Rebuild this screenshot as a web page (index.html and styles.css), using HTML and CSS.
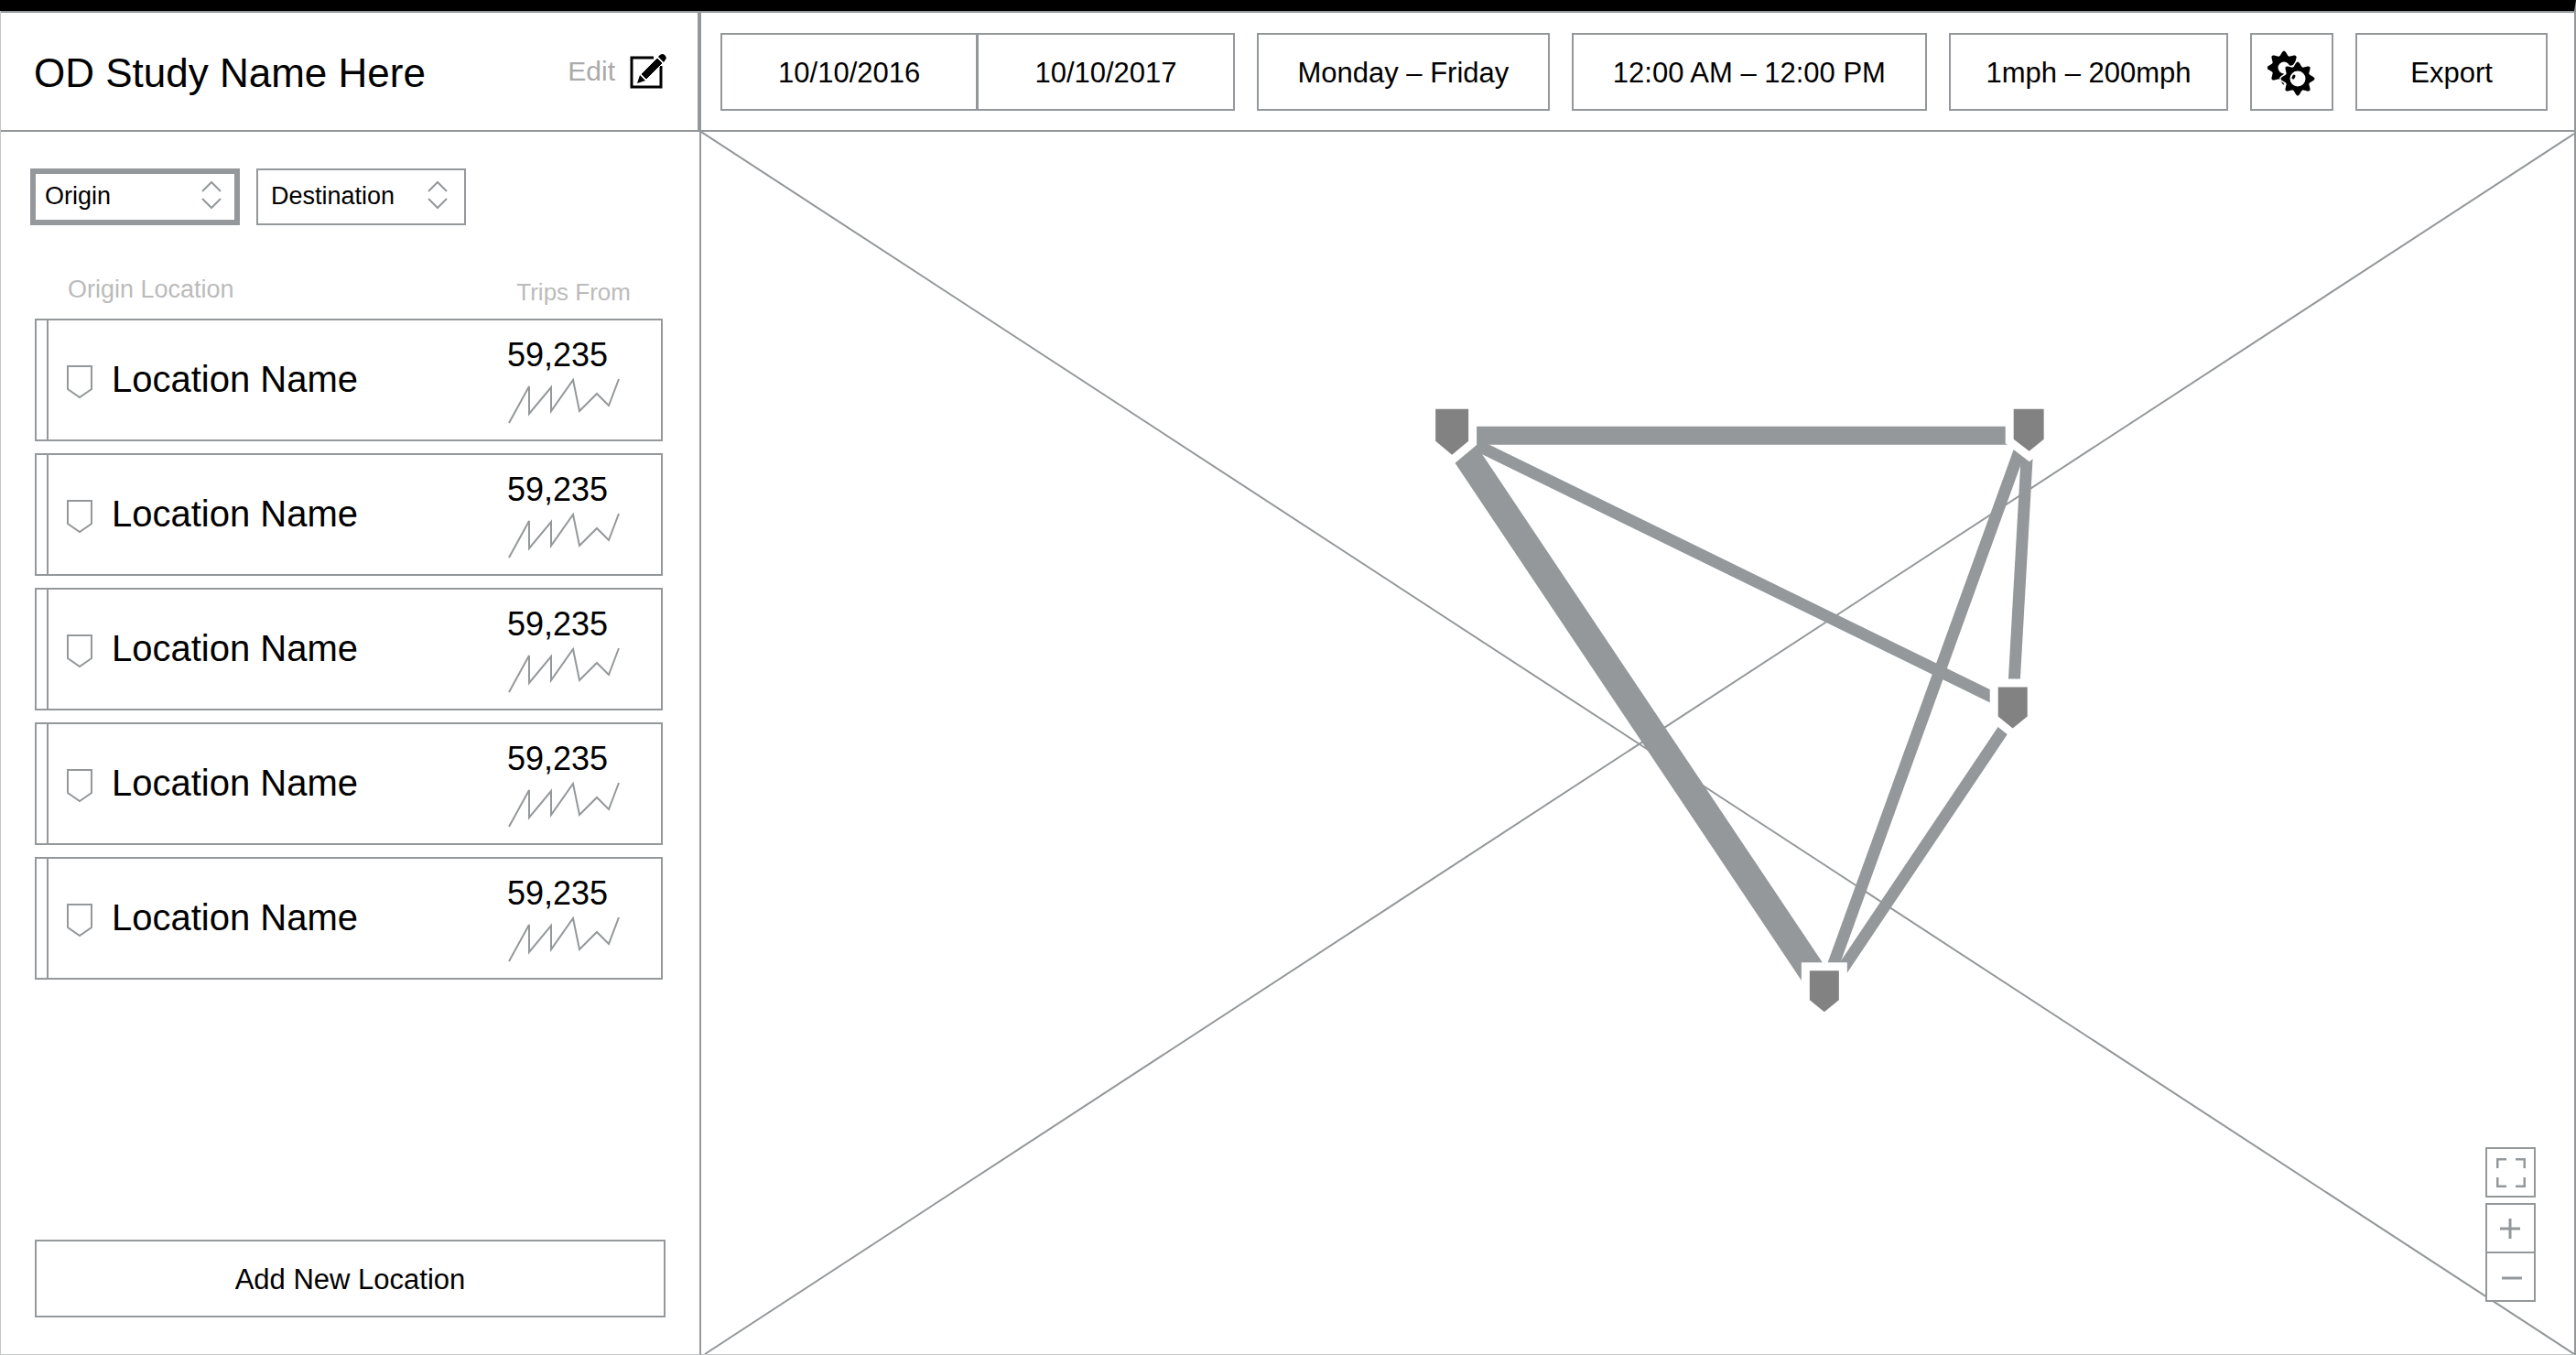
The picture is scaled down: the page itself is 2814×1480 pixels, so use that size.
FILE: index.html
```html
<!DOCTYPE html>
<html lang="en">
<head>
    <meta charset="UTF-8">
    <meta name="viewport" content="width=device-width, initial-scale=1.0">
    <title>OD Study</title>
    <link rel="stylesheet" href="styles.css">
</head>
<body>
    <!-- shared shapes -->
    <svg class="defs" width="0" height="0" aria-hidden="true">
        <symbol id="pin" viewBox="0 0 30 38">
            <path d="M2 2H28V27L15 36L2 27Z" fill="none" stroke="#94989a" stroke-width="2"/>
        </symbol>
        <symbol id="spark" viewBox="0 0 124 52">
            <polyline points="2,50 24,10 24,40 48,11 48,37 72,3 79,37 98,18 111,31 122,2" fill="none" stroke="#94989a" stroke-width="2"/>
        </symbol>
        <symbol id="sorter" viewBox="0 0 22 32">
            <path d="M1 12L11 2L21 12M1 20L11 30L21 20" fill="none" stroke="#94989a" stroke-width="2"/>
        </symbol>
        <g id="teeth">
            <path id="tooth" d="M-5 -12L-2 -17Q0 -20 2 -17L5 -12Z"/>
            <use href="#tooth" transform="rotate(45)"/>
            <use href="#tooth" transform="rotate(90)"/>
            <use href="#tooth" transform="rotate(135)"/>
            <use href="#tooth" transform="rotate(180)"/>
            <use href="#tooth" transform="rotate(225)"/>
            <use href="#tooth" transform="rotate(270)"/>
            <use href="#tooth" transform="rotate(315)"/>
        </g>
    </svg>

    <div class="app">
        <aside class="sidebar">
            <div class="study">
                <h1>OD Study Name Here</h1>
                <button class="edit" type="button">
                    Edit
                    <svg width="40" height="40" viewBox="0 0 40 40" aria-hidden="true">
                        <path d="M26 5H2V37H34V14" fill="none" stroke="#000" stroke-width="3"/>
                        <path d="M30 5L36 11L18 29L12 23Z" stroke="#fff" stroke-width="1"/>
                        <path d="M11 24L17 30L8 33Z"/>
                        <path d="M31 4L33 2Q36 0 38 2Q41 5 39 7L37 10Z"/>
                    </svg>
                </button>
            </div>

            <div class="panel">
                <div class="filters">
                    <label class="picker active">
                        <select aria-label="Origin"><option>Origin</option></select>
                        <svg><use href="#sorter"/></svg>
                    </label>
                    <label class="picker">
                        <select aria-label="Destination"><option>Destination</option></select>
                        <svg><use href="#sorter"/></svg>
                    </label>
                </div>

                <div class="list-head">
                    <span>Origin Location</span>
                    <span class="trips-head">Trips From</span>
                </div>
                <ul class="locations">
                    <li class="location">
                        <svg class="pin"><use href="#pin"/></svg>
                        <span class="name">Location Name</span>
                        <div class="trips">59,235<svg class="spark"><use href="#spark"/></svg></div>
                    </li>
                    <li class="location">
                        <svg class="pin"><use href="#pin"/></svg>
                        <span class="name">Location Name</span>
                        <div class="trips">59,235<svg class="spark"><use href="#spark"/></svg></div>
                    </li>
                    <li class="location">
                        <svg class="pin"><use href="#pin"/></svg>
                        <span class="name">Location Name</span>
                        <div class="trips">59,235<svg class="spark"><use href="#spark"/></svg></div>
                    </li>
                    <li class="location">
                        <svg class="pin"><use href="#pin"/></svg>
                        <span class="name">Location Name</span>
                        <div class="trips">59,235<svg class="spark"><use href="#spark"/></svg></div>
                    </li>
                    <li class="location">
                        <svg class="pin"><use href="#pin"/></svg>
                        <span class="name">Location Name</span>
                        <div class="trips">59,235<svg class="spark"><use href="#spark"/></svg></div>
                    </li>
                </ul>

                <button class="box add" type="button">Add New Location</button>
            </div>
        </aside>

        <main class="main">
            <div class="toolbar">
                <div class="dates">
                    <button class="box" type="button">10/10/2016</button>
                    <button class="box" type="button">10/10/2017</button>
                </div>
                <button class="box days" type="button">Monday – Friday</button>
                <button class="box hours" type="button">12:00 AM – 12:00 PM</button>
                <button class="box speed" type="button">1mph – 200mph</button>
                <button class="box settings" type="button" aria-label="Settings">
                    <svg width="54" height="50" viewBox="0 0 54 50" aria-hidden="true">
                        <g transform="translate(18 19)">
                            <circle r="10" fill="none" stroke="#000" stroke-width="7"/>
                            <use href="#teeth"/>
                        </g>
                        <g transform="translate(33 31)">
                            <circle r="16" fill="#fff"/>
                            <use href="#teeth" stroke="#fff" stroke-width="3"/>
                            <circle r="11" fill="none" stroke="#000" stroke-width="5"/>
                            <use href="#teeth"/>
                            <path d="M-5 -1L-4 -3" fill="none" stroke="#000" stroke-width="3" stroke-linecap="round"/>
                        </g>
                    </svg>
                </button>
                <button class="box export" type="button">Export</button>
            </div>

            <div class="map">
                <svg class="layer" viewBox="0 0 2046 1336" preserveAspectRatio="none">
                    <path d="M0 0L2046 1336M4 1336L2046 2" fill="none" stroke="#94989a" stroke-width="2"/>
                </svg>
                <svg class="layer" viewBox="766 144 2046 1336">
                    <!-- trips between locations, wider means more -->
                    <g fill="none" stroke="#94989a" stroke-width="13">
                        <path d="M1596 489L1983 1067" stroke-width="30"/>
                        <path d="M1600 476H2200" stroke-width="20"/>
                        <path d="M1604 482L2185 766"/>
                        <path d="M2211 480L1999 1065"/>
                        <path d="M2215 490L2200 755"/>
                        <path d="M2197 785L2009 1065"/>
                    </g>
                    <g fill="#828282" stroke="#fff" stroke-width="18" paint-order="stroke">
                        <path d="M1568 447H1604V482L1586 497L1568 482Z"/>
                        <path d="M2200 447H2233V480L2217 493L2200 480Z"/>
                        <path d="M2183 751H2215V783L2199 796L2183 783Z"/>
                        <path d="M1977 1061H2009V1093L1993 1106L1977 1093Z"/>
                    </g>
                </svg>
                <div class="controls">
                    <button class="control" type="button" aria-label="Full screen">
                        <svg width="32" height="32" viewBox="0 0 32 32">
                            <path d="M1 11V1H11M21 1H31V11M31 21V31H21M11 31H1V21"/>
                        </svg>
                    </button>
                    <div class="zoom">
                        <button class="control" type="button" aria-label="Zoom in">
                            <svg width="32" height="32" viewBox="0 0 32 32"><path d="M4 16H26M15 5V27"/></svg>
                        </button>
                        <button class="control" type="button" aria-label="Zoom out">
                            <svg width="32" height="32" viewBox="0 0 32 32"><path d="M6 17H28"/></svg>
                        </button>
                    </div>
                </div>
            </div>
        </main>
    </div>
</body>
</html>
```
FILE: styles.css
```css
* {
    box-sizing: border-box;
}
body {
    margin: 0;
    font-family: "Liberation Sans", Arial, sans-serif;
    font-size: 31px;
    color: #000;
    background-color: #fff;
}
button, select {
    font: inherit;
    color: inherit;
    cursor: pointer;
}
svg {
    display: block;
}
.defs {
    position: absolute;
}
.app {
    display: grid;
    grid-template-columns: 766px 1fr;
    min-height: 100vh;
    border-top: 12px solid #000;
    border-right: 2px solid #94989a;
}

/* sidebar */
.sidebar {
    display: flex;
    flex-direction: column;
    border-right: 2px solid #94989a;
    border-left: 1px solid #c4c6c7;
    border-bottom: 1px solid #c4c6c7;
}
.study {
    display: flex;
    align-items: center;
    justify-content: space-between;
    height: 132px;
    padding: 0 34px 0 36px;
    border: solid #94989a;
    border-width: 2px 2px 2px 0;
}
h1 {
    margin: 4px 0 0;
    font-size: 44px;
    font-weight: normal;
}
.edit {
    display: flex;
    align-items: center;
    gap: 16px;
    padding: 0;
    border: none;
    background: none;
    font-size: 30px;
    color: #aaa;
}
.panel {
    flex: 1;
    display: flex;
    flex-direction: column;
    padding: 40px 37px;
}
.filters {
    display: flex;
    gap: 18px;
    margin-left: -5px;
}
.picker {
    position: relative;
    width: 229px;
    height: 62px;
}
.picker select {
    appearance: none;
    width: 100%;
    height: 100%;
    padding: 0 14px 2px;
    border: 2px solid #94989a;
    border-radius: 0;
    background-color: #fff;
    font-size: 27px;
}
.picker.active select {
    padding: 0 10px 2px;
    border-width: 6px;
}
.picker svg {
    position: absolute;
    top: 13px;
    right: 20px;
    width: 22px;
    height: 32px;
    pointer-events: none;
}
.list-head {
    display: flex;
    justify-content: space-between;
    align-items: flex-start;
    margin-top: 54px;
    padding: 0 38px 0 36px;
    font-size: 27px;
    line-height: 32px;
    color: #bbb;
}
.trips-head {
    padding-top: 3px;
    font-size: 26px;
}
.locations {
    display: flex;
    flex-direction: column;
    gap: 13px;
    margin: 13px 3px 0 0;
    padding: 0;
    list-style: none;
}
.location {
    display: flex;
    align-items: center;
    height: 134px;
    padding: 0 44px 0 18px;
    border: 2px solid #94989a;
    /* the narrow strip on the left of each card */
    background: linear-gradient(#94989a, #94989a) 11px 0 / 2px 100% no-repeat;
}
.pin {
    width: 30px;
    height: 38px;
    margin: 4px 20px 0 14px;
}
.name {
    flex: 1;
    padding-bottom: 2px;
    font-size: 40px;
}
.trips {
    font-size: 36px;
    line-height: 44px;
}
.spark {
    width: 124px;
    height: 52px;
    margin-top: 2px;
}
.box {
    display: flex;
    align-items: center;
    justify-content: center;
    height: 85px;
    padding: 3px 0 0;
    border: 2px solid #94989a;
    background-color: #fff;
}
.add {
    width: 100%;
    margin-top: auto;
}

/* toolbar */
.main {
    display: flex;
    flex-direction: column;
    min-width: 0;
}
.toolbar {
    display: flex;
    align-items: center;
    gap: 24px;
    height: 132px;
    padding: 0 29px 0 21px;
    border: solid #94989a;
    border-width: 2px 0;
}
.dates {
    display: flex;
    flex: 568;
}
.dates .box {
    flex: 1;
}
.dates .box + .box {
    margin-left: -1px;
}
.days {
    flex: 320;
}
.hours {
    flex: 388;
}
.speed {
    flex: 305;
}
.settings {
    flex: 88;
}
.export {
    flex: 208;
}

/* map */
.map {
    position: relative;
    flex: 1;
    border-bottom: 1px solid #c4c6c7;
}
.layer {
    position: absolute;
    width: 100%;
    height: 100%;
}
.controls {
    position: absolute;
    right: 42px;
    bottom: 57px;
    display: flex;
    flex-direction: column;
    gap: 6px;
}
.control {
    display: flex;
    align-items: center;
    justify-content: center;
    width: 55px;
    height: 55px;
    padding: 0;
    border: 2px solid #94989a;
    background-color: #fff;
}
.control svg {
    fill: none;
    stroke: #94989a;
    stroke-width: 3;
}
.zoom .control + .control {
    margin-top: -2px;
}
```
